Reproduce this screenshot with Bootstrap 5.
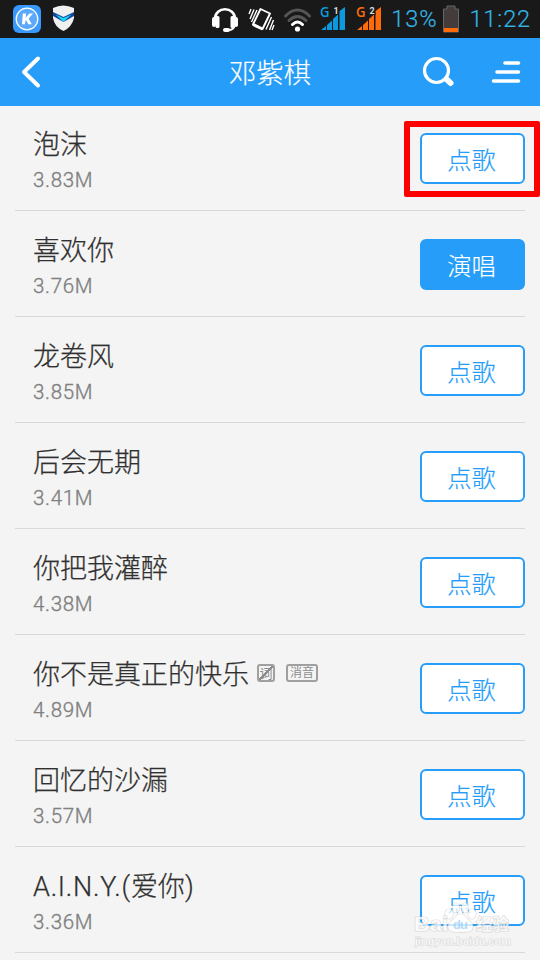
<!DOCTYPE html>
<html lang="zh-CN">
<head>
<meta charset="utf-8">
<meta name="viewport" content="width=device-width, initial-scale=1">
<title>邓紫棋</title>
<link href="https://cdn.jsdelivr.net/npm/bootstrap@5.3.0/dist/css/bootstrap.min.css" rel="stylesheet">
<style>
  body { width: 540px; height: 960px; overflow: hidden; background: #f4f4f4; font-family: Roboto, "Noto Sans CJK SC", sans-serif; font-weight: 300; }
  svg { display: block; flex: none; }
  .status { height: 38px; background: #191919; color: #33b5e5; font-size: 23.5px; line-height: 40px; padding: 0 9px 0 12px; }
  .status-time { letter-spacing: .9px; white-space: nowrap; -webkit-text-stroke: .2px; }
  .topbar { height: 68px; background: #269df8; color: #fff; padding: 0 18px; }
  .topbar h1 { font-size: 27.3px; font-weight: 300; line-height: 68px; padding-top: 3px; -webkit-text-stroke: .2px; }
  .songs { padding: 0 15px; }
  .song { height: 106px; border-bottom: 1px solid #d8d8d8; padding-left: 18px; }
  .song:first-child { height: 105px; }
  .song:first-child .song-info { padding-top: 21px; }
  .song-info { padding-top: 22px; }
  .song-name { height: 36px; line-height: 37px; font-size: 27px; color: #303030; white-space: nowrap; -webkit-text-stroke: .25px; }
  .latin { letter-spacing: .75px; }
  .latin span { letter-spacing: 0; }
  .song-size { height: 34px; line-height: 34px; font-size: 20.5px; font-weight: 300; letter-spacing: .7px; color: #808080; -webkit-text-stroke: .35px; }
  .btn-song { width: 105px; height: 51px; margin-top: 28px; padding: 1px 2px 0 0; border: 2px solid #269df8; border-radius: 6px; background: #fff; color: #269df8; font-size: 24.3px; font-weight: 300; line-height: 49px; -webkit-text-stroke: .2px; }
  .song:first-child .btn-song { margin-top: 27px; }
  .btn-sing { background: #269df8; color: #fff; }
  .chip { height: 18px; border: 2px solid #a0a0a0; border-radius: 3px; color: #8c8c8c; font-size: 12px; font-weight: 400; line-height: 15px; text-align: center; margin-bottom: 5px; -webkit-text-stroke: 0; }
  .chip-lyric { width: 18px; margin-left: 8px; font-size: 13px; background: linear-gradient(135deg, transparent 46%, #8c8c8c 46%, #8c8c8c 54%, transparent 54%); }
  .chip-mute { width: 32px; margin-left: 11px; }
  .highlight { left: 404px; top: 121px; width: 136px; height: 76px; border: 6px solid #fe0000; border-radius: 2px; }
  .watermark { left: 410px; top: 898px; font-family: "Liberation Sans", "Noto Sans CJK SC", sans-serif; font-weight: 700; }
</style>
</head>
<body class="position-relative">
<header>
  <div class="status d-flex align-items-center">
    <svg width="29" height="29" viewBox="0 0 29 29"><rect x="1" y="0" width="28" height="28" rx="6" fill="#3898fb"/><circle cx="15" cy="14" r="10.800" fill="#5ca9fb" stroke="#fff" stroke-width="1.300"/><path d="M10.800 8.500h3.300l-.4 4 3.700-4h3.700l-4.500 4.900 3.200 5.800h-3.500l-2.200-4-.8.900-.3 3.100h-3z" fill="#fff"/></svg>
    <svg class="ms-2" width="34" height="29" viewBox="49 5 34 29"><path d="M53 8q10-5 21 0v10q-2 9-10.500 13q-9-4-10.500-13z" fill="#f0f0f0"/><path d="M53 12l10.500 5 10.500-5v4l-10.500 6-10.500-6z" fill="#12459c"/><path d="M55.500 14.500l8 3.500 8-3.500-8 7.500z" fill="#20d5f1"/></svg>
    <svg class="ms-auto" width="174" height="38" viewBox="209 0 174 38">
      <g fill="none" stroke="#fff"><path d="M215 21v-2c0-13 20-13 20 0v2" stroke-width="2.600"/><path d="M234.500 26q-1 4-6 4" stroke-width="2"/></g>
      <g fill="#fff"><rect x="212" y="17" width="4" height="10" rx="2"/><rect x="215.500" y="16" width="4" height="12" rx="1.500"/><rect x="230.500" y="16" width="4" height="12" rx="1.500"/><rect x="234" y="17" width="4" height="10" rx="2"/><rect x="223" y="28" width="7" height="4" rx="2"/></g>
      <g fill="none" stroke="#fff"><path stroke-width="1.900" d="M260.500 9l9.500 4.500-7.500 15.500-9.500-4.500z" stroke-linejoin="round"/><path d="M253 24.500l9.500 4.500" stroke-width="3"/><path stroke-width="1.400" d="M251 9l-2 5M254 9.500l-4 9.500M257 10l-5.500 12M273.500 20l-4 10M271.500 17l-5.500 12.500M274 25l-2 5"/></g>
      <g fill="none" stroke-linecap="round"><path d="M285.500 16q12-12 24 0" stroke="#555" stroke-width="3"/><path d="M289 20.500q8.500-8 17 0" stroke="#555" stroke-width="3"/><path d="M292.500 24.500q5-5 10 0" stroke="#fff" stroke-width="3"/><circle cx="297.500" cy="29" r="2.600" fill="#fff"/></g>
      <g fill="#0d99de"><path d="M321 30l5-4v4zM327 25l5-4.500V30h-5zM333 19l5-4.500V30h-5zM339.500 11l5.500-4v23h-5.500z"/></g>
      <g fill="#ff6b0a"><path d="M357 30l5-4v4zM363 25l5-4.500V30h-5zM369 19l5-4.500V30h-5zM375.500 11l5.500-4v23h-5.500z"/></g>
      <g font-family="Open Sans, sans-serif" font-weight="600" font-size="14"><text x="320" y="17" textLength="9.500" lengthAdjust="spacingAndGlyphs" fill="#0d99de">G</text><text x="356" y="17" textLength="9.500" lengthAdjust="spacingAndGlyphs" fill="#ff6b0a">G</text></g>
      <g font-family="Roboto, sans-serif" font-weight="700" font-size="9" fill="#ddd" stroke="#191919" stroke-width="2" paint-order="stroke"><text x="333.500" y="14">1</text><text x="369.500" y="14">2</text></g>
    </svg>
    <span class="status-time ms-2">13%</span>
    <svg class="ms-1" width="20" height="30" viewBox="-1 0 20 30"><path d="M1.500 5H5V2h8v3h3.500v23h-15z" fill="#443b3b" stroke="#666" stroke-width="1"/><path d="M2 24h14v4H2z" fill="#ff6b0a"/></svg>
    <span class="status-time ms-2">11:22</span>
  </div>
  <nav class="topbar d-flex align-items-center">
    <svg width="101" height="34" viewBox="0 0 101 34"><path d="M20 3.500L6 17l14 13.500" fill="none" stroke="#fff" stroke-width="4" stroke-linecap="round" stroke-linejoin="round"/></svg>
    <h1 class="flex-fill text-center m-0">邓紫棋</h1>
    <svg width="101" height="34" viewBox="421 55 101 34"><g fill="none" stroke="#fff" stroke-linecap="round"><circle cx="436.500" cy="70.500" r="12" stroke-width="3.200"/><path d="M445.500 79l1.500 1.500" stroke-width="4"/><path d="M448 80.500l2.500 2.500" stroke-width="6"/><path d="M505 63h13.500M497 72h21.500M493.500 81h25" stroke-width="3.600"/></g></svg>
  </nav>
</header>
<main class="songs">
  <div class="song d-flex justify-content-between"><div class="song-info"><div class="song-name">泡沫</div><div class="song-size">3.83M</div></div><button class="btn btn-song">点歌</button></div>
  <div class="song d-flex justify-content-between"><div class="song-info"><div class="song-name">喜欢你</div><div class="song-size">3.76M</div></div><button class="btn btn-song btn-sing">演唱</button></div>
  <div class="song d-flex justify-content-between"><div class="song-info"><div class="song-name">龙卷风</div><div class="song-size">3.85M</div></div><button class="btn btn-song">点歌</button></div>
  <div class="song d-flex justify-content-between"><div class="song-info"><div class="song-name">后会无期</div><div class="song-size">3.41M</div></div><button class="btn btn-song">点歌</button></div>
  <div class="song d-flex justify-content-between"><div class="song-info"><div class="song-name">你把我灌醉</div><div class="song-size">4.38M</div></div><button class="btn btn-song">点歌</button></div>
  <div class="song d-flex justify-content-between"><div class="song-info"><div class="song-name d-flex align-items-center">你不是真正的快乐<span class="chip chip-lyric">词</span><span class="chip chip-mute">消音</span></div><div class="song-size">4.89M</div></div><button class="btn btn-song">点歌</button></div>
  <div class="song d-flex justify-content-between"><div class="song-info"><div class="song-name">回忆的沙漏</div><div class="song-size">3.57M</div></div><button class="btn btn-song">点歌</button></div>
  <div class="song d-flex justify-content-between"><div class="song-info"><div class="song-name latin">A.I.N.Y.(<span>爱你</span>)</div><div class="song-size">3.36M</div></div><button class="btn btn-song">点歌</button></div>
</main>
<div class="highlight position-absolute"></div>
<svg class="watermark position-absolute" width="110" height="52" viewBox="410 898 110 52" fill="#fff" fill-opacity=".75" stroke="#bbb" stroke-opacity=".5" stroke-width="1.200" paint-order="stroke">
  <ellipse cx="449" cy="914" rx="4" ry="5"/><ellipse cx="456" cy="908" rx="3.500" ry="5"/><ellipse cx="465" cy="908" rx="3.500" ry="5"/><ellipse cx="472" cy="914" rx="4" ry="5"/><path d="M460.500 914q4 0 7 5 7 5 5 10-2 4-12 3-10 1-12-3-2-5 5-10 3-5 7-5z"/>
  <text x="414" y="931" font-size="21" textLength="34" lengthAdjust="spacingAndGlyphs">Bai</text>
  <text x="453" y="929" font-size="13" fill="#9dcff7" stroke="none" textLength="15">du</text>
  <text x="476" y="930" font-size="16" textLength="33" lengthAdjust="spacingAndGlyphs">经验</text>
  <text x="415" y="945" font-size="10.500" stroke-width="1" textLength="96" lengthAdjust="spacingAndGlyphs">jingyan.baidu.com</text>
</svg>
<script src="https://cdn.jsdelivr.net/npm/bootstrap@5.3.0/dist/js/bootstrap.bundle.min.js"></script>
</body>
</html>
